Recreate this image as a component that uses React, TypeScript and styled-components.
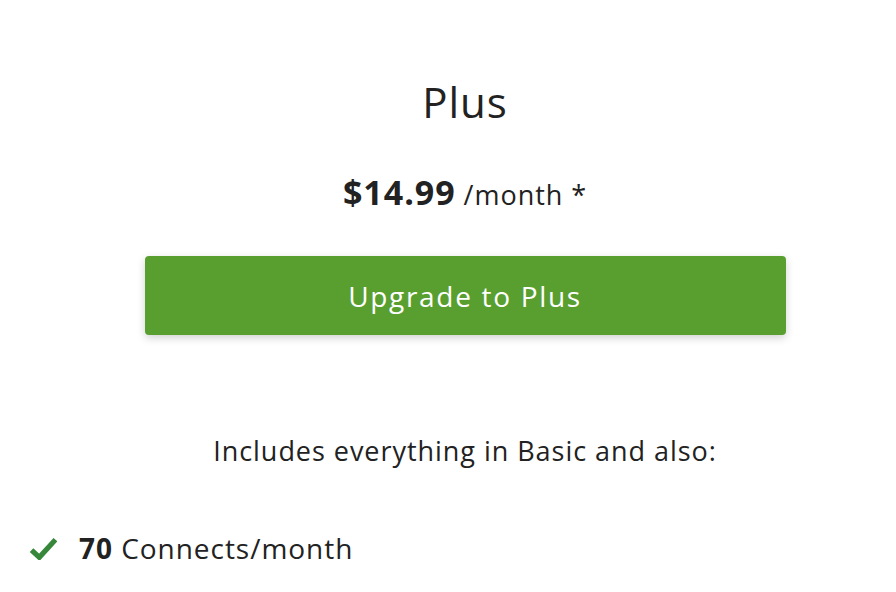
import React from "react";
import styled, { createGlobalStyle } from "styled-components";

const GlobalStyle = createGlobalStyle`
  html, body {
    margin: 0;
    padding: 0;
    background: #ffffff;
    overflow: hidden;
  }
  body {
    font-family: "Open Sans", "Liberation Sans", sans-serif;
    color: #222222;
    letter-spacing: 0.06em;
  }
`;

const features = [{ amount: "70", label: "Connects/month" }];

export default function App() {
  return (
    <>
      <GlobalStyle />
      <PlanCard>
        <PlanName>Plus</PlanName>
        <Price>
          <Amount>$14.99</Amount>
          <Period>/month *</Period>
        </Price>
        <UpgradeButton type="button">Upgrade to Plus</UpgradeButton>
        <Includes>Includes everything in Basic and also:</Includes>
        <FeatureList>
          {features.map((f) => (
            <Feature key={f.label}>
              <CheckIcon viewBox="0 0 26 22">
                <path d="M1.5 12.5 L9 19.5 L24.5 2.5" />
              </CheckIcon>
              <span>
                <b>{f.amount}</b> {f.label}
              </span>
            </Feature>
          ))}
        </FeatureList>
      </PlanCard>
    </>
  );
}

const PlanCard = styled.div`
  width: 930px;
  display: flex;
  flex-direction: column;
  align-items: center;
  padding-top: 74px;
  box-sizing: border-box;
`;

const PlanName = styled.h2`
  margin: 0;
  font-size: 42px;
  font-weight: 400;
  line-height: 56px;
  color: #222222;
`;

const Price = styled.div`
  margin-top: 42px;
  display: flex;
  align-items: baseline;
  gap: 8px;
  line-height: 40px;
`;

const Amount = styled.span`
  font-size: 34px;
  font-weight: 700;
`;

const Period = styled.span`
  font-size: 27px;
`;

const UpgradeButton = styled.button`
  margin-top: 41px;
  width: 641px;
  height: 79px;
  border: none;
  border-radius: 4px;
  background: #589f30;
  color: #ffffff;
  font-family: inherit;
  font-size: 28px;
  letter-spacing: 0.06em;
  box-shadow: 0 3px 8px rgba(0, 0, 0, 0.18);
  cursor: pointer;
`;

const Includes = styled.p`
  margin: 99px 0 0;
  font-size: 27px;
  line-height: 34px;
`;

const FeatureList = styled.ul`
  align-self: stretch;
  list-style: none;
  margin: 63px 0 0;
  padding: 0 0 0 30px;
`;

const Feature = styled.li`
  display: flex;
  align-items: center;
  gap: 22px;
  font-size: 28px;
  line-height: 34px;

  b {
    font-weight: 700;
  }
`;

const CheckIcon = styled.svg`
  width: 27px;
  height: 23px;
  fill: none;
  stroke: #37873a;
  stroke-width: 5;
  stroke-linecap: butt;
  stroke-linejoin: miter;
`;
